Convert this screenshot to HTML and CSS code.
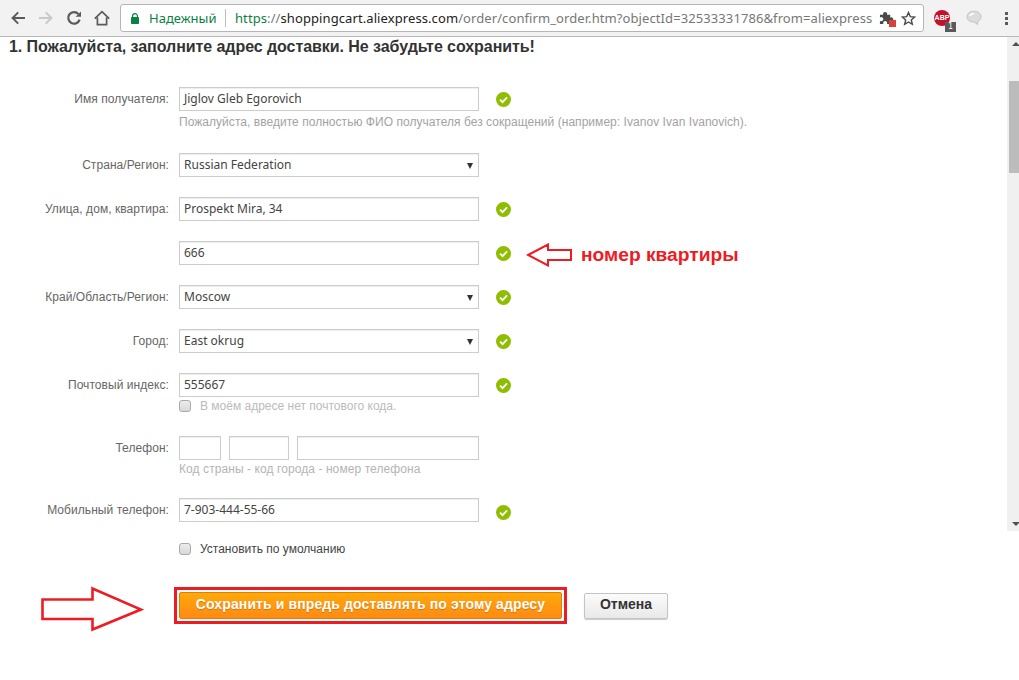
FILE: index.html
```html
<!DOCTYPE html>
<html lang="ru">
<head>
<meta charset="utf-8">
<title>Адрес доставки</title>
<link rel="stylesheet" href="styles.css">
</head>
<body>
<header class="toolbar">
  <div class="nav">
    <svg class="nav-icon" viewBox="0 0 16 16"><path d="M15 8H3M8.200 2.400 2.600 8l5.600 5.600" fill="none" stroke="#5a5a5a" stroke-width="2"/></svg>
    <svg class="nav-icon" viewBox="0 0 16 16"><path d="M1 8h12M7.800 2.400 13.400 8l-5.600 5.600" fill="none" stroke="#c9c9c9" stroke-width="2"/></svg>
    <svg class="nav-icon" viewBox="0 0 16 16"><path d="M13.600 9.600A5.800 5.800 0 1 1 12.400 4" fill="none" stroke="#5a5a5a" stroke-width="2.200"/><path d="M9.600 6.800h5.400V1.400z" fill="#5a5a5a"/></svg>
    <svg class="nav-icon home" viewBox="0 0 16 16"><path d="M.8 8.600 8 1.600l7.200 7M3.400 7.400v7.200h9.200V7.400" fill="none" stroke="#5a5a5a" stroke-width="1.700"/></svg>
  </div>
  <div class="omnibox">
    <svg class="lock" viewBox="0 0 8 11"><path d="M1.600 4.500V3a2.400 2.400 0 0 1 4.800 0v1.500" fill="none" stroke="#0b8043" stroke-width="1.200"/><rect y="4" width="8" height="7" rx=".8" fill="#0b8043"/></svg>
    <span class="secure">Надежный</span>
    <span class="url"><span class="scheme">https</span><span class="dim">://</span>shoppingcart.aliexpress.com<span class="dim">/order/confirm_order.htm?objectId=32533331786&amp;from=aliexpress</span></span>
    <span class="omni-icons">
      <span class="puzzle">
        <svg viewBox="0 0 16 16"><path d="M1 5h3.400a2.200 2.200 0 1 1 4.200 0H12v3.200a2.200 2.200 0 1 1 0 3.800V15H8.500a2.200 2.200 0 1 0-3.800 0H1v-3.600a2.200 2.200 0 1 0 0-3.400z" fill="#4a4a4a"/></svg>
        <span class="puzzle-x"></span>
      </span>
      <svg class="star" viewBox="0 0 16 16"><path d="M8 1.600 9.900 6l4.700.4-3.600 3.100 1.100 4.700L8 11.700l-4.100 2.500L5 9.500 1.400 6.400 6.100 6z" fill="none" stroke="#4a4a4a" stroke-width="1.500"/></svg>
    </span>
  </div>
  <div class="extensions">
    <span class="abp"><span class="abp-text">ABP</span><span class="abp-count">1</span></span>
    <svg class="bubble" viewBox="0 0 16 16"><path d="M8 1.200c4 0 7 2.300 7 5.500 0 2.600-1.600 4.400-3.800 5l.8 2.800-3.800-2.400C4 12.100 1 10 1 6.700 1 3.500 4 1.200 8 1.200z" fill="#dcdcdc" stroke="#c4c4c4"/><path d="M4 6c.5-1.600 2-2.500 4-2.500" fill="none" stroke="#fff" stroke-width="1.500"/></svg>
    <span class="menu-dots"><i></i><i></i><i></i></span>
  </div>
</header>

<main class="page">
  <div class="scrollbar">
    <span class="arrow-up"></span>
    <span class="thumb"></span>
    <span class="arrow-down"></span>
  </div>

  <h1 class="title">1. Пожалуйста, заполните адрес доставки. Не забудьте сохранить!</h1>

  <form class="address-form">
    <div class="row r-name">
      <label class="label">Имя получателя:</label>
      <div class="field"><span class="input">Jiglov Gleb Egorovich</span><p class="hint">Пожалуйста, введите полностью ФИО получателя без сокращений (например: Ivanov Ivan Ivanovich).</p></div>
      <svg class="ok" viewBox="0 0 16 16"><use href="#check"/></svg>
    </div>
    <div class="row r-std">
      <label class="label">Страна/Регион:</label>
      <div class="field"><span class="input select">Russian Federation</span></div>
    </div>
    <div class="row r-std">
      <label class="label">Улица, дом, квартира:</label>
      <div class="field"><span class="input">Prospekt Mira, 34</span></div>
      <svg class="ok" viewBox="0 0 16 16"><use href="#check"/></svg>
    </div>
    <div class="row r-std">
      <span class="label"></span>
      <div class="field"><span class="input">666</span></div>
      <svg class="ok" viewBox="0 0 16 16"><use href="#check"/></svg>
    </div>
    <div class="row r-std">
      <label class="label">Край/Область/Регион:</label>
      <div class="field"><span class="input select">Moscow</span></div>
      <svg class="ok" viewBox="0 0 16 16"><use href="#check"/></svg>
    </div>
    <div class="row r-std">
      <label class="label">Город:</label>
      <div class="field"><span class="input select">East okrug</span></div>
      <svg class="ok" viewBox="0 0 16 16"><use href="#check"/></svg>
    </div>
    <div class="row r-postal">
      <label class="label">Почтовый индекс:</label>
      <div class="field"><span class="input">555667</span>
        <div class="check-line muted"><span class="checkbox"></span>В моём адресе нет почтового кода.</div>
      </div>
      <svg class="ok" viewBox="0 0 16 16"><use href="#check"/></svg>
    </div>
    <div class="row r-phone">
      <label class="label">Телефон:</label>
      <div class="field">
        <div class="phone"><span class="input p1"></span><span class="input p2"></span><span class="input p3"></span></div>
        <p class="hint hint-phone">Код страны - код города - номер телефона</p>
      </div>
    </div>
    <div class="row r-mobile">
      <label class="label">Мобильный телефон:</label>
      <div class="field"><span class="input">7-903-444-55-66</span></div>
      <svg class="ok ok-low" viewBox="0 0 16 16"><use href="#check"/></svg>
    </div>
    <div class="row r-default">
      <span class="label"></span>
      <div class="check-line"><span class="checkbox"></span>Установить по умолчанию</div>
    </div>
    <div class="actions">
      <div class="save-outline"><button type="button" class="btn-save">Сохранить и впредь доставлять по этому адресу</button></div>
      <button type="button" class="btn-cancel">Отмена</button>
    </div>
  </form>

  <div class="note">
    <svg class="note-arrow" viewBox="0 0 46 24"><path d="M2 12 22 1.500V7h23v10H22v5.500z" fill="#fff" stroke="#ed1c24" stroke-width="2"/></svg>
    <span class="note-text">номер квартиры</span>
  </div>
  <svg class="big-arrow" viewBox="0 0 104 46"><path d="M2.500 13.500H52.500V2.500L101 23.500 52.500 43.500V33H2.500z" fill="#fff" stroke="#ed1c24" stroke-width="2.600"/></svg>
</main>

<svg class="defs" width="0" height="0"><defs>
  <g id="check"><circle cx="8" cy="8" r="8" fill="#8fbe00"/><path d="M4.300 8.200 7 10.800l4.800-5" fill="none" stroke="#fff" stroke-width="2"/></g>
</defs></svg>
</body>
</html>
```
FILE: styles.css
```css
* { box-sizing: border-box; }
html, body { margin: 0; padding: 0; height: 680px; overflow: hidden; background: #fff; }
body { font-family: "Liberation Sans", Arial, sans-serif; font-size: 12px; color: #333; }

.toolbar { height: 37px; background: #f2f2f2; border-bottom: 1px solid #b8b8b8; display: flex; align-items: center; }
.nav { width: 120px; display: flex; align-items: center; gap: 12px; padding-left: 10px; flex: none; }
.nav-icon { width: 16px; height: 16px; flex: none; }
.omnibox { width: 804px; flex: none; height: 28px; background: #fff; border: 1px solid #b6b6b6; border-radius: 3px; display: flex; align-items: center; padding-left: 10px; font-family: "Noto Sans", sans-serif; font-size: 13px; white-space: nowrap; overflow: hidden; }
.lock { width: 8px; height: 11px; flex: none; margin-right: 10px; }
.secure { color: #0b8043; width: 77px; flex: none; border-right: 1px solid #bdbdbd; line-height: 18px; margin-right: 9px; }
.url { color: #222; flex: none; width: 636px; letter-spacing: .09px; }
.scheme { color: #0b8043; }
.dim { color: #777; }
.omni-icons { display: flex; align-items: center; gap: 6px; margin-left: 8px; }
.puzzle { position: relative; width: 16px; height: 16px; display: block; }
.puzzle svg { width: 15px; height: 15px; display: block; }
.puzzle-x { position: absolute; right: -1px; bottom: -1px; width: 7px; height: 7px; background: #d9413a; }
.star { width: 15px; height: 15px; }

.extensions { display: flex; align-items: center; flex: none; padding-left: 10px; }
.abp { position: relative; width: 16px; height: 16px; border-radius: 50%; background: #c5102a; display: block; margin-right: 16px; }
.abp-text { position: absolute; left: 0; top: 4px; width: 16px; text-align: center; color: #fff; font: 700 7px/8px "Liberation Sans", sans-serif; }
.abp-count { position: absolute; left: 11px; top: 12px; width: 11px; height: 10px; background: #5a5a5a; color: #fff; font: 8px/10px "DejaVu Sans", sans-serif; text-align: center; }
.bubble { width: 16px; height: 16px; flex: none; margin-right: 23px; }
.menu-dots { display: flex; flex-direction: column; gap: 2px; }
.menu-dots i { width: 3px; height: 3px; background: #5a5a5a; display: block; }

.page { position: relative; height: 643px; padding: 0 0 0 9px; }
.scrollbar { position: absolute; right: 0; top: 0; width: 12px; height: 494px; background: #f0f0f0; }
.thumb { position: absolute; left: 2px; right: 0; top: 44px; height: 92px; background: #bcbcbc; }
.arrow-up, .arrow-down { position: absolute; left: 5px; width: 0; height: 0; border-left: 4px solid transparent; border-right: 4px solid transparent; }
.arrow-up { top: 5px; border-bottom: 4px solid #505050; }
.arrow-down { bottom: 5px; border-top: 4px solid #505050; }

.title { margin: 0; font-size: 16px; line-height: 20px; font-weight: 700; color: #333; letter-spacing: -.06px; }

.address-form { padding-top: 30px; margin-left: -9px; }
.row { display: grid; grid-template-columns: 169px 300px auto; column-gap: 10px; align-items: start; }
.label { text-align: right; color: #666; line-height: 24px; display: block; white-space: nowrap; letter-spacing: .06px; }
.input { display: block; width: 300px; height: 24px; border: 1px solid #ccc; box-shadow: inset 0 1px 1px #eee; background: #fff; padding-left: 4px; font: 12px/22px "Noto Sans", sans-serif; color: #444; position: relative; }
.select::after { content: ""; position: absolute; right: 5px; top: 9px; border-left: 3.500px solid transparent; border-right: 3.500px solid transparent; border-top: 6px solid #333; }
.hint { margin: 0; color: #a3a3a3; line-height: 14px; padding-top: 4px; white-space: nowrap; letter-spacing: .04px; }
.ok { width: 15px; height: 15px; margin: 5px 0 0 7px; display: block; }
.ok-low { margin-top: 7px; }

.r-name { height: 66px; }
.r-std { height: 44px; }
.r-postal { height: 63px; }
.r-phone { height: 62px; }
.r-mobile { height: 38px; }
.r-default { height: 51px; padding-top: 5px; }

.check-line { display: flex; align-items: center; height: 16px; color: #444; white-space: nowrap; }
.check-line.muted { color: #bbb; margin-top: 1px; }
.checkbox { width: 12px; height: 12px; border: 1px solid #aaa; border-radius: 3px; background: linear-gradient(#ececec, #d8d8d8); margin-right: 9px; flex: none; }

.phone { display: flex; gap: 8px; }
.p1 { width: 42px; }
.p2 { width: 60px; }
.p3 { width: 182px; }
.hint-phone { padding-top: 2px; color: #b4b4b4; letter-spacing: .08px; }

.actions { display: flex; align-items: center; padding-left: 174px; gap: 17px; }
.save-outline { border: 3px solid #ed1c24; padding: 2px; height: 37px; width: 393px; }
.btn-save { display: block; width: 100%; height: 27px; margin: 0; padding: 0 0 3px; border: 1px solid #e08000; border-radius: 2px; background: linear-gradient(#ffa90a, #ff8a14); color: #fff; font: 700 14px/20px "Liberation Sans", sans-serif; letter-spacing: .11px; text-shadow: 0 1px 1px rgba(120,60,0,.35); }
.btn-cancel { width: 84px; height: 26px; padding: 0 0 3px; border: 1px solid #c4c4c4; border-radius: 2px; background: linear-gradient(#fbfbfb, #e9e9e9); box-shadow: 0 1px 1px #ccc; color: #333; font: 700 14px/20px "Liberation Sans", sans-serif; }

.note { position: absolute; left: 526px; top: 206px; display: flex; align-items: center; gap: 9px; }
.note-arrow { width: 46px; height: 24px; flex: none; }
.note-text { color: #ed1c24; font-weight: 700; font-size: 19.2px; line-height: 24px; white-space: nowrap; }
.big-arrow { position: absolute; left: 40px; top: 549px; width: 104px; height: 46px; }
.defs { position: absolute; }
```
